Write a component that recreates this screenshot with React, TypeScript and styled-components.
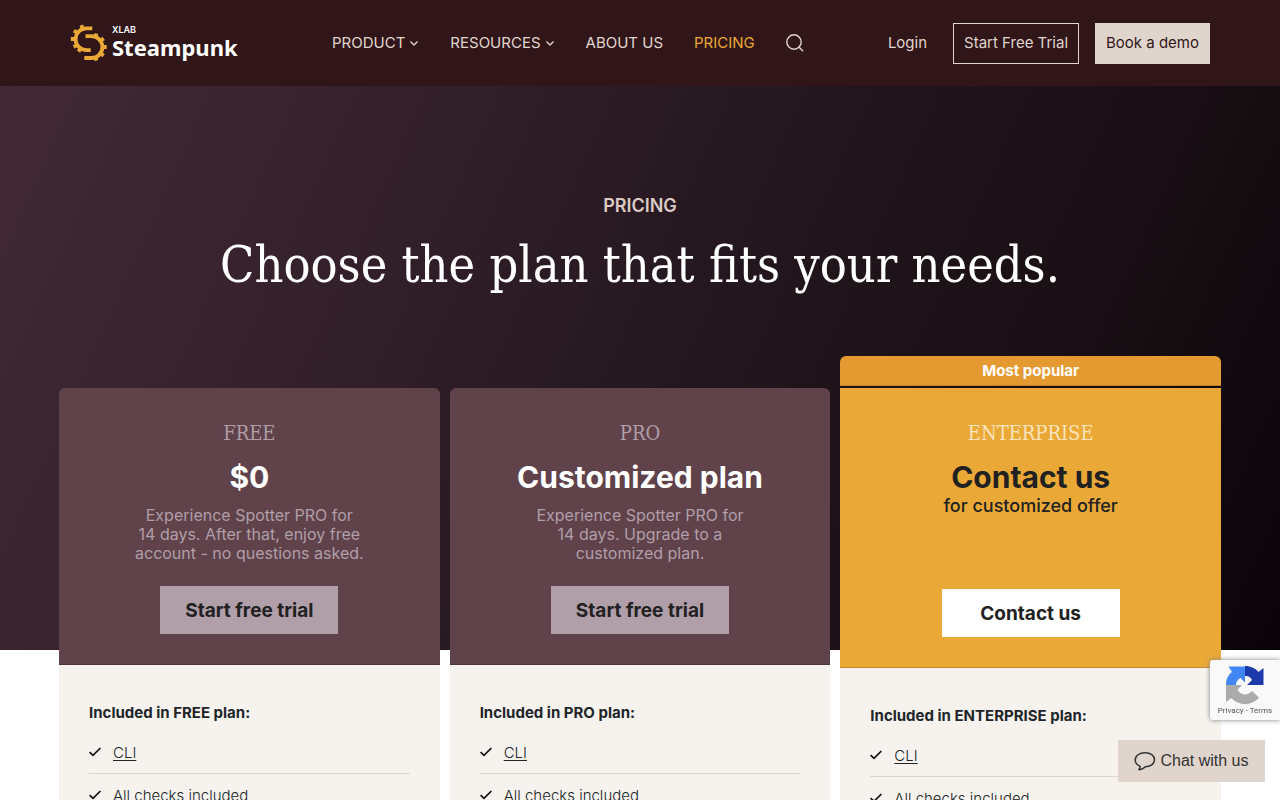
import React from "react";
import styled, { createGlobalStyle } from "styled-components";

const sans = `Inter, "Liberation Sans", sans-serif`;
const slab = `"DejaVu Serif Condensed", "DejaVu Serif", serif`;

const GlobalStyle = createGlobalStyle`
  *, *::before, *::after { box-sizing: border-box; }
  body { margin: 0; background: #fff; color: #212529; font-family: ${sans}; font-size: 15px; }
  h1, h2, h3, p, ul { margin: 0; padding: 0; }
  a { color: inherit; text-decoration: none; }
  button { font-family: inherit; cursor: pointer; }
`;

const Header = styled.header`
  background: #311619;
  color: #e0d5cd;
`;

const HeaderInner = styled.div`
  display: flex;
  align-items: center;
  max-width: 1140px;
  height: 86px;
  margin: 0 auto;
`;

const Logo = styled.a`
  display: flex;
  align-items: center;
  gap: 4px;
  width: 170px;
  color: #fff;

  svg { flex: none; }
`;

const LogoText = styled.span`
  display: flex;
  flex-direction: column;
  padding-bottom: 4px;
  font-weight: 700;
`;

const LogoOwner = styled.span`
  font-size: 9px;
  line-height: 12px;
  font-weight: 600;
`;

const LogoName = styled.span`
  font-family: "Noto Sans", "Open Sans", sans-serif;
  font-size: 22px;
  line-height: 22px;
`;

const Nav = styled.nav`
  display: flex;
  align-items: center;
  gap: 31px;
  margin-left: 92px;
`;

const NavLink = styled.a<{ $active?: boolean }>`
  display: inline-flex;
  align-items: center;
  gap: 4px;
  line-height: 20px;
  white-space: nowrap;
  color: ${(p) => (p.$active ? "#eaa836" : "inherit")};
`;

const SearchButton = styled.button`
  display: flex;
  padding: 0;
  border: 0;
  background: none;
  color: inherit;
`;

const Actions = styled.div`
  display: flex;
  align-items: center;
  gap: 16px;
  margin-left: auto;
  line-height: 19px;
`;

const LoginLink = styled.a`
  margin-right: 10px;
  padding-bottom: 2px;
`;

const HeaderButton = styled.a<{ $filled?: boolean }>`
  padding: 9px 10px 11px;
  border: 1px solid #e0d5cd;
  white-space: nowrap;
  background: ${(p) => (p.$filled ? "#e0d5cd" : "transparent")};
  color: ${(p) => (p.$filled ? "#311619" : "#e0d5cd")};
`;

const Hero = styled.section`
  min-height: 564px;
  padding: 108px 16px 0;
  text-align: center;
  background: linear-gradient(114deg, #422937 0%, #35212c 25%, #24171f 52%, #180e13 80%, #0a0408 100%);
`;

const Eyebrow = styled.p`
  color: #dccbc5;
  font-size: 18px;
  line-height: 24px;
  font-weight: 600;
`;

const Title = styled.h1`
  margin-top: 17px;
  color: #fff;
  font-family: ${slab};
  font-size: 50px;
  line-height: 60px;
  font-weight: 400;
`;

const Plans = styled.section`
  position: relative;
  display: grid;
  grid-template-columns: repeat(3, 1fr);
  align-items: start;
  gap: 10px;
  max-width: 1162px;
  margin: -294px auto 0;
`;

const Card = styled.article<{ $featured?: boolean }>`
  margin-top: ${(p) => (p.$featured ? "0" : "32px")};
`;

const Ribbon = styled.p`
  margin-bottom: 2px;
  border-bottom: 1px solid #c48128;
  border-radius: 6px 6px 0 0;
  background: #e59a31;
  color: #fff;
  text-align: center;
  font-size: 15px;
  line-height: 29px;
  font-weight: 700;
`;

const CardHead = styled.div<{ $featured?: boolean }>`
  display: flex;
  flex-direction: column;
  align-items: center;
  min-height: ${(p) => (p.$featured ? "280px" : "277px")};
  padding: 32px 30px 30px;
  text-align: center;
  background: ${(p) => (p.$featured ? "#eaa836" : "#60424b")};
  border-bottom: 1px solid ${(p) => (p.$featured ? "#c08a35" : "#4c323b")};
  border-radius: ${(p) => (p.$featured ? "0" : "6px 6px 0 0")};
  color: ${(p) => (p.$featured ? "#212121" : "#fff")};
`;

const PlanName = styled.h2<{ $featured?: boolean }>`
  color: ${(p) => (p.$featured ? "#fae4bd" : "#b09ea8")};
  font-family: ${slab};
  font-size: 20px;
  line-height: 26px;
  font-weight: 400;
`;

const Price = styled.p`
  margin-top: 14px;
  font-size: 30px;
  line-height: 34px;
  font-weight: 700;
`;

const PriceNote = styled.p`
  font-size: 18px;
  line-height: 24px;
  font-weight: 500;
`;

const Pitch = styled.p`
  margin-top: 12px;
  color: #b09ea8;
  font-size: 16px;
  line-height: 19px;
`;

const CardButton = styled.button<{ $featured?: boolean }>`
  width: 178px;
  height: 48px;
  margin-top: auto;
  padding: 0;
  border: 0;
  background: ${(p) => (p.$featured ? "#fff" : "#b09ea8")};
  color: #212121;
  font-size: 19px;
  font-weight: 700;
`;

const CardBody = styled.div`
  padding: 36px 30px 30px;
  background: #f6f3ee;
`;

const IncludedTitle = styled.h3`
  font-size: 15px;
  line-height: 24px;
  font-weight: 700;
`;

const FeatureList = styled.ul`
  margin-top: 6px;
  list-style: none;
`;

const Feature = styled.li`
  display: flex;
  align-items: center;
  gap: 12px;
  height: 43px;
  border-bottom: 1px solid #ddd3cf;
  font-weight: 300;
`;

const FeatureLink = styled.a`
  text-decoration: underline;
  text-underline-offset: 2px;
`;

const Recaptcha = styled.aside`
  position: fixed;
  right: 0;
  bottom: 80px;
  display: flex;
  flex-direction: column;
  align-items: center;
  gap: 2px;
  width: 70px;
  height: 60px;
  padding-top: 6px;
  border-radius: 3px 0 0 3px;
  background: #f9f9f9;
  box-shadow: 0 0 5px gray;
  color: #555;
  font-family: Roboto, sans-serif;
  font-size: 8px;
  line-height: 10px;
`;

const ChatButton = styled.button`
  position: fixed;
  right: 15px;
  bottom: 18px;
  display: flex;
  align-items: center;
  justify-content: center;
  gap: 4px;
  width: 147px;
  height: 42px;
  padding: 0;
  border: 0;
  background: #e0d5cd;
  color: #333;
  && { font-family: "Liberation Sans", sans-serif; }
  font-size: 16px;
`;

const GearLogo = () => (
  <svg width="38" height="38" viewBox="0 0 38 38" fill="none" stroke="#eaa836" aria-hidden="true">
    <g strokeWidth="3.800">
      <path d="M22.300 4.300H16.500A10.900 10.900 0 0 0 16.500 26.100H20.700" />
      <path d="M15.500 12.200H21.500A10.900 10.900 0 0 1 21.500 34H14.300" />
    </g>
    <path
      strokeWidth="3.800"
      d="M12.700 5L11.400 1.200M7.400 9L3.900 6.700M5.500 15H.8M7.200 20.800L3.700 23M10.500 24.500L8.500 27.600M25.300 13.200L26.500 9.500M30.500 16.700L33.700 14.400M32.300 23H36.700M30.500 29.300L33.700 31.600M25.300 32.800L26.500 36.600"
    />
  </svg>
);

const Chevron = () => (
  <svg width="10" height="10" viewBox="0 0 10 10" fill="none" stroke="currentColor" strokeWidth="1.4" aria-hidden="true">
    <path d="M1.500 3.500L5 7L8.500 3.500" />
  </svg>
);

const SearchIcon = () => (
  <svg width="18" height="18" viewBox="0 0 18 18" fill="none" stroke="currentColor" strokeWidth="1.4" aria-hidden="true">
    <circle cx="8" cy="8" r="7.2" />
    <path d="M13 13L17 17.200" />
  </svg>
);

const Check = () => (
  <svg width="12" height="10" viewBox="0 0 12 10" fill="none" stroke="#111" strokeWidth="1.7" aria-hidden="true">
    <path d="M.6 5.200L4 8.400L11.400 1" />
  </svg>
);

const RecaptchaLogo = () => (
  <svg width="38" height="38" viewBox="0 0 38 38" aria-hidden="true">
    <path fill="#1c3aa9" d="M19 0C25 0 29.500 2.500 32.500 6L37.500 2V19H21L26 14C24.500 11 22 9.500 19 10Z" />
    <path fill="#4285f4" d="M19 0V16.500L14.500 12C11.500 13.500 10 16 10 19H0C0 13 2.500 8.500 6 6L2.500 .5H19Z" />
    <path fill="#ababab" d="M0 19H16L11.500 23.500C13 27 16 28.500 19 28.500C22 28.500 24 27 26 25L33 31.500C29.500 35.500 25 38 19 38C13 38 8.500 35.500 5.500 32L0 36Z" />
  </svg>
);

const ChatIcon = () => (
  <svg width="22" height="20" viewBox="0 0 22 20" fill="none" stroke="#333" strokeWidth="1.5" aria-hidden="true">
    <path d="M6 15.200C2.800 13.800 1.200 11.500 1.200 9C1.200 4.700 5.500 1.700 11 1.700S20.500 4.700 20.500 8.800S16.500 15.700 11.200 15.700C9.500 17.700 7.500 18.600 4.700 18.500C6 17.500 6.400 16.500 6 15.200Z" strokeLinejoin="round" />
  </svg>
);

type Plan = {
  name: string;
  price: string;
  note?: string;
  pitch?: string[];
  cta: string;
  featured?: boolean;
};

const plans: Plan[] = [
  {
    name: "FREE",
    price: "$0",
    pitch: ["Experience Spotter PRO for", "14 days. After that, enjoy free", "account - no questions asked."],
    cta: "Start free trial",
  },
  {
    name: "PRO",
    price: "Customized plan",
    pitch: ["Experience Spotter PRO for", "14 days. Upgrade to a", "customized plan."],
    cta: "Start free trial",
  },
  { name: "ENTERPRISE", price: "Contact us", note: "for customized offer", cta: "Contact us", featured: true },
];

const PlanCard = ({ plan }: { plan: Plan }) => (
  <Card $featured={plan.featured}>
    {plan.featured && <Ribbon>Most popular</Ribbon>}
    <CardHead $featured={plan.featured}>
      <PlanName $featured={plan.featured}>{plan.name}</PlanName>
      <Price>{plan.price}</Price>
      {plan.note && <PriceNote>{plan.note}</PriceNote>}
      {plan.pitch && (
        <Pitch>
          {plan.pitch.map((line, i) => (
            <React.Fragment key={line}>
              {i > 0 && <br />}
              {line}
            </React.Fragment>
          ))}
        </Pitch>
      )}
      <CardButton $featured={plan.featured}>{plan.cta}</CardButton>
    </CardHead>
    <CardBody>
      <IncludedTitle>Included in {plan.name} plan:</IncludedTitle>
      <FeatureList>
        <Feature>
          <Check />
          <FeatureLink href="#cli">CLI</FeatureLink>
        </Feature>
        <Feature>
          <Check />
          All checks included
        </Feature>
      </FeatureList>
    </CardBody>
  </Card>
);

export default function App() {
  return (
    <>
      <GlobalStyle />
      <Header>
        <HeaderInner>
          <Logo href="#home">
            <GearLogo />
            <LogoText>
              <LogoOwner>XLAB</LogoOwner>
              <LogoName>Steampunk</LogoName>
            </LogoText>
          </Logo>
          <Nav>
            <NavLink href="#product">PRODUCT <Chevron /></NavLink>
            <NavLink href="#resources">RESOURCES <Chevron /></NavLink>
            <NavLink href="#about">ABOUT US</NavLink>
            <NavLink href="#pricing" $active>PRICING</NavLink>
            <SearchButton aria-label="Search"><SearchIcon /></SearchButton>
          </Nav>
          <Actions>
            <LoginLink href="#login">Login</LoginLink>
            <HeaderButton href="#trial">Start Free Trial</HeaderButton>
            <HeaderButton href="#demo" $filled>Book a demo</HeaderButton>
          </Actions>
        </HeaderInner>
      </Header>
      <main>
        <Hero>
          <Eyebrow>PRICING</Eyebrow>
          <Title>Choose the plan that fits your needs.</Title>
        </Hero>
        <Plans>
          {plans.map((plan) => (
            <PlanCard key={plan.name} plan={plan} />
          ))}
        </Plans>
      </main>
      <Recaptcha>
        <RecaptchaLogo />
        <span><a href="#privacy">Privacy</a> - <a href="#terms">Terms</a></span>
      </Recaptcha>
      <ChatButton>
        <ChatIcon />
        Chat with us
      </ChatButton>
    </>
  );
}
